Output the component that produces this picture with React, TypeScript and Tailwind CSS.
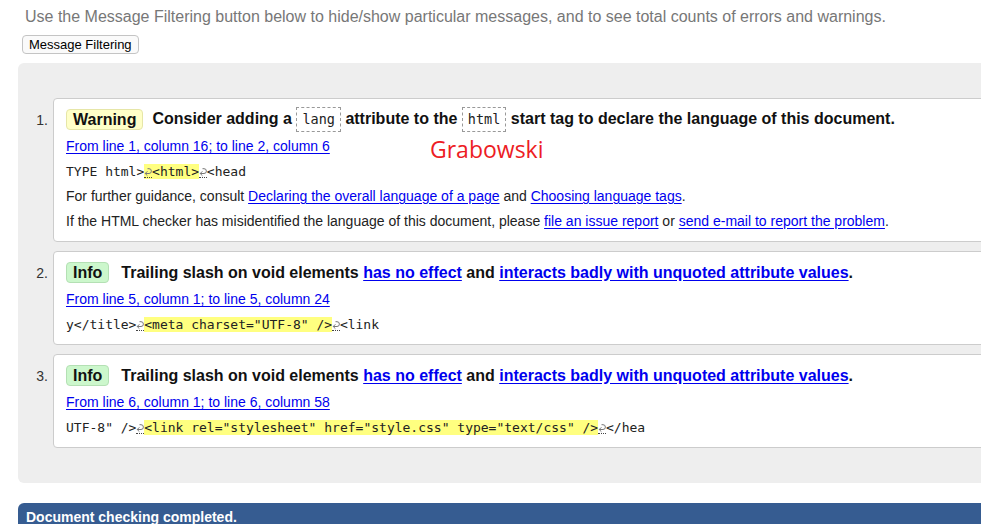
import React from 'react';

const sans = "font-['Liberation_Sans',Arial,sans-serif]";
const mono = "font-['DejaVu_Sans_Mono',monospace]";

// line-break marker shown in the extract (hooked arrow)
const Lf = () => (
  <span className="inline-block w-[7.8px] h-[13px] align-[-2px] border-b border-dotted border-[#444]">
    <svg width="8" height="12" viewBox="0 0 8 12" className="block">
      <path d="M1.2 8.5 H5 A2.4 2.4 0 0 0 5 3.7 H3.5" fill="none" stroke="#777" strokeWidth="1" />
      <path d="M3.4 6.3 L1.2 8.5 L3.4 10.7" fill="none" stroke="#777" strokeWidth="1" />
    </svg>
  </span>
);

const A: React.FC<{ children: React.ReactNode }> = ({ children }) => (
  <a href="#" className="text-[#0000ee] underline underline-offset-[2px]">
    {children}
  </a>
);

const Badge: React.FC<{ kind: 'warning' | 'info' }> = ({ kind }) =>
  kind === 'warning' ? (
    <span className="inline-block h-[21px] leading-[19px] px-[6px] rounded-[4px] border border-[#e6e6a8] bg-[#ffffc8] text-[#111] font-bold text-[16px]">
      Warning
    </span>
  ) : (
    <span className="inline-block h-[21px] leading-[19px] px-[6px] rounded-[4px] border border-[#b4e0b4] bg-[#ccf7cc] text-[#111] font-bold text-[16px]">
      Info
    </span>
  );

const Code: React.FC<{ children: React.ReactNode }> = ({ children }) => (
  <code className={`${mono} inline-block px-[5px] leading-[23px] text-[13.5px] font-normal text-[#222] border border-dashed border-[#999] align-middle`}>
    {children}
  </code>
);

const Item: React.FC<{ n: number; children: React.ReactNode }> = ({ n, children }) => (
  <li className="flex">
    <div className="w-[35px] shrink-0 pr-[5px] text-right text-[14px] text-[#333] pt-[12px] leading-[20px]">{n}.</div>
    <div className="flex-1 bg-white border border-[#cccccc] rounded-[4px] pt-[10px] pb-[10px] pl-[12px]">
      {children}
    </div>
  </li>
);

const Trailing = () => (
  <div className="flex items-center h-[21px] text-[16px] font-bold text-[#111]">
    <Badge kind="info" />
    <span className="ml-[12px]">
      Trailing slash on void elements <A>has no effect</A> and{' '}
      <A>interacts badly with unquoted attribute values</A>.
    </span>
  </div>
);

const Extract: React.FC<{ children: React.ReactNode }> = ({ children }) => (
  <p className={`${mono} mt-[5px] h-[20px] pt-[1px] text-[13px] leading-[20px] text-[#222] whitespace-pre`}>{children}</p>
);

export default function App() {
  return (
    <div className={`${sans} w-full h-[524px] overflow-hidden bg-white relative`}>
      <div className="w-[1010px] pl-[18px]">
        <p className="pt-[7px] ml-[7px] text-[16px] leading-[20px] text-[#777]">
          Use the Message Filtering button below to hide/show particular messages, and to see total counts of errors and warnings.
        </p>
        <button className="block mt-[8px] ml-[4px] h-[19px] px-[6px] text-[13px] leading-[17px] text-black bg-[#fafafa] border border-[#c4c4c4] rounded-[4px]">
          Message Filtering
        </button>

        <div className="mt-[9px] bg-[#eeeeee] rounded-[6px] pt-[35px] pb-[35px]">
          <ol className="flex flex-col gap-[9px]">
            <Item n={1}>
              <div className="flex items-center h-[21px] text-[16px] font-bold text-[#111]">
                <Badge kind="warning" />
                <span className="ml-[9px]">
                  Consider adding a <Code>lang</Code> attribute to the <Code>html</Code> start tag to declare the language of this document.
                </span>
              </div>
              <p className="mt-[6px] h-[20px] text-[14px] leading-[20px]">
                <A>From line 1, column 16; to line 2, column 6</A>
              </p>
              <Extract>
                TYPE html&gt;<span className="bg-[#ffff80]"><Lf />&lt;html&gt;</span><Lf />&lt;head
              </Extract>
              <p className="mt-[5px] h-[20px] text-[14px] leading-[20px] text-[#222]">
                For further guidance, consult <A>Declaring the overall language of a page</A> and <A>Choosing language tags</A>.
              </p>
              <p className="mt-[5px] h-[20px] text-[14px] leading-[20px] text-[#222]">
                If the HTML checker has misidentified the language of this document, please <A>file an issue report</A> or <A>send e-mail to report the problem</A>.
              </p>
            </Item>

            <Item n={2}>
              <Trailing />
              <p className="mt-[6px] h-[20px] text-[14px] leading-[20px]">
                <A>From line 5, column 1; to line 5, column 24</A>
              </p>
              <Extract>
                y&lt;/title&gt;<Lf /><span className="bg-[#ffff80]">&lt;meta charset="UTF-8" /&gt;</span><Lf />&lt;link
              </Extract>
            </Item>

            <Item n={3}>
              <Trailing />
              <p className="mt-[6px] h-[20px] text-[14px] leading-[20px]">
                <A>From line 6, column 1; to line 6, column 58</A>
              </p>
              <Extract>
                UTF-8" /&gt;<Lf /><span className="bg-[#ffff80]">&lt;link rel="stylesheet" href="style.css" type="text/css" /&gt;</span><Lf />&lt;/hea
              </Extract>
            </Item>
          </ol>
        </div>

        <div className="mt-[20px] bg-[#365c91] rounded-tl-[6px] px-[8px] pt-[4px] pb-[6px] text-white font-bold text-[14px] leading-[20px]">
          Document checking completed.
        </div>
      </div>

      {/* watermark over the first message */}
      <div className="absolute left-[430px] top-[133px] font-['Open_Sans',sans-serif] text-[23px] leading-[32px] text-[#ed1c24]">
        Grabowski
      </div>
    </div>
  );
}
